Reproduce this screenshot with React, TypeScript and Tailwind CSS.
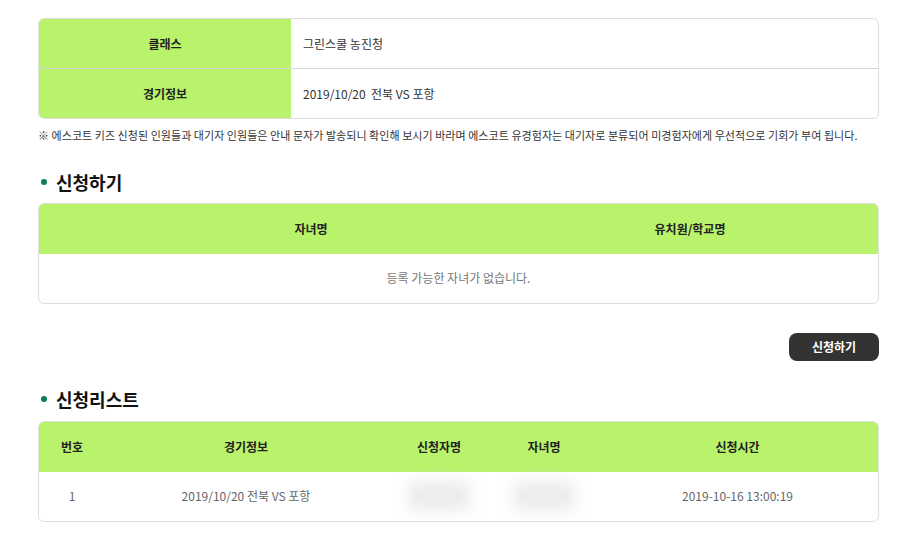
import React from 'react'

const font = { fontFamily: '"Noto Sans CJK KR", "Noto Sans", sans-serif' }

function SectionTitle({ children }: { children: React.ReactNode }) {
  return (
    <h2 className="flex items-center gap-[9px] text-[18px] font-bold text-[#111] leading-none">
      <span className="w-[6px] h-[6px] rounded-full bg-[#0b7d4f] ml-[3px]" />
      {children}
    </h2>
  )
}

function Blur() {
  return <div className="mx-auto w-[62px] h-[30px] rounded-md bg-[#ececec] blur-[7px]" />
}

export default function App() {
  return (
    <div className="w-[900px] h-[556px] bg-white text-[#333] pt-[18px] pl-[38px] pr-[21px] overflow-hidden" style={font}>
      {/* Info table */}
      <div className="border border-[#dedede] rounded-md overflow-hidden text-[12px]">
        <div className="grid grid-cols-[252px_1fr] h-[50px] border-b border-[#d6d6d6]">
          <div className="bg-[#b9f26b] flex items-center justify-center font-bold text-[#222]">클래스</div>
          <div className="flex items-center pl-[12px]">그린스쿨 농진청</div>
        </div>
        <div className="grid grid-cols-[252px_1fr] h-[49px]">
          <div className="bg-[#b9f26b] flex items-center justify-center font-bold text-[#222]">경기정보</div>
          <div className="flex items-center pl-[12px] whitespace-pre">2019/10/20  전북 VS 포항</div>
        </div>
      </div>

      <p className="mt-[8px] text-[11px] tracking-[0.05px] text-[#333] whitespace-nowrap">
        ※ 에스코트 키즈 신청된 인원들과 대기자 인원들은 안내 문자가 발송되니 확인해 보시기 바라며 에스코트 유경험자는 대기자로 분류되어 미경험자에게 우선적으로 기회가 부여 됩니다.
      </p>

      <div className="mt-[29px]">
        <SectionTitle>신청하기</SectionTitle>
      </div>

      {/* Apply table */}
      <div className="mt-[12px] border border-[#dedede] rounded-md overflow-hidden text-[12px]">
        <div className="grid grid-cols-[544px_214px_1fr] h-[50px] bg-[#b9f26b] font-bold text-[#222]">
          <div className="flex items-center justify-center">자녀명</div>
          <div className="flex items-center justify-center">유치원/학교명</div>
          <div />
        </div>
        <div className="h-[49px] flex items-center justify-center text-[#777]">등록 가능한 자녀가 없습니다.</div>
      </div>

      <div className="flex justify-end mt-[29px]">
        <button className="w-[90px] h-[28px] rounded-lg bg-[#333] text-white text-[12px] font-bold">신청하기</button>
      </div>

      <div className="mt-[29px]">
        <SectionTitle>신청리스트</SectionTitle>
      </div>

      {/* List table */}
      <div className="mt-[13px] border border-[#dedede] rounded-md overflow-hidden text-[12px]">
        <div className="grid grid-cols-[66px_282px_104px_106px_1fr] h-[50px] bg-[#b9f26b] font-bold text-[#222]">
          <div className="flex items-center justify-center">번호</div>
          <div className="flex items-center justify-center">경기정보</div>
          <div className="flex items-center justify-center">신청자명</div>
          <div className="flex items-center justify-center">자녀명</div>
          <div className="flex items-center justify-center">신청시간</div>
        </div>
        <div className="grid grid-cols-[66px_282px_104px_106px_1fr] h-[49px] text-[#666]">
          <div className="flex items-center justify-center">1</div>
          <div className="flex items-center justify-center">2019/10/20 전북 VS 포항</div>
          <div className="flex items-center"><Blur /></div>
          <div className="flex items-center"><Blur /></div>
          <div className="flex items-center justify-center">2019-10-16 13:00:19</div>
        </div>
      </div>
    </div>
  )
}
